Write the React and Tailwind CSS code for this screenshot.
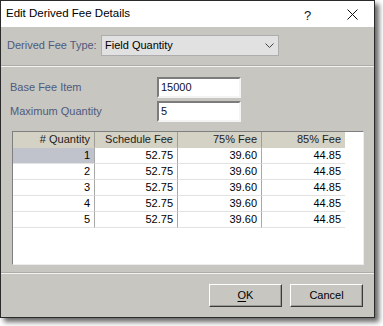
import React from 'react';

const font = { fontFamily: '"Liberation Sans", Arial, sans-serif' };

const rows = [1, 2, 3, 4, 5].map((n) => ({
  qty: n,
  schedule: '52.75',
  fee75: '39.60',
  fee85: '44.85',
}));

const columns = [
  { key: 'qty', label: '# Quantity', width: 'w-[82px]' },
  { key: 'schedule', label: 'Schedule Fee', width: 'w-[83px]' },
  { key: 'fee75', label: '75% Fee', width: 'w-[84px]' },
  { key: 'fee85', label: '85% Fee', width: 'w-[83px]' },
];

const TitleBar = () => (
  <div className="h-[26px] bg-white flex items-center relative">
    <span className="pl-[5px] text-[11.5px] text-black">Edit Derived Fee Details</span>
    <span className="absolute left-[303px] top-[5px] text-[13px] text-[#111]">?</span>
    <svg className="absolute left-[346px] top-[8px]" width="11" height="11" viewBox="0 0 11 11">
      <path d="M0.5 0.5 L10.5 10.5 M10.5 0.5 L0.5 10.5" stroke="#111" strokeWidth="1" fill="none" />
    </svg>
  </div>
);

const FieldRow = ({ label, value, className = '' }) => (
  <div className={`flex items-center ${className}`}>
    <span className="w-[147px] text-[11px] text-[#4e5a7e]">{label}</span>
    <div className="w-[84px] h-[21px] bg-white border-2 border-t-[#7c7c7c] border-l-[#7c7c7c] border-r-[#f4f4f4] border-b-[#f4f4f4] flex items-center pl-[2px] text-[11px] text-[#10102a]">
      {value}
    </div>
  </div>
);

const FeeGrid = () => (
  <div className="ml-[11px] w-[352px] h-[134px] bg-white border border-t-[#7f7f7f] border-l-[#7f7f7f] border-r-[#ececec] border-b-[#ececec]">
    <div className="flex">
      {columns.map((col, i) => (
        <div
          key={col.key}
          className={`${col.width} h-4 bg-[#d4d1c5] flex items-center justify-end pr-[4px] text-[11px] text-[#222] border-b border-[#d4d1c5] ${i < 3 ? 'border-r border-r-[#9d9d98]' : ''}`}
        >
          {col.label}
        </div>
      ))}
    </div>
    {rows.map((row, r) => (
      <div key={row.qty} className="flex">
        {columns.map((col, i) => (
          <div
            key={col.key}
            className={`${col.width} h-4 flex items-center justify-end pr-[4px] text-[11px] text-black border-b border-b-[#e2e2e2] ${i < 3 ? 'border-r border-r-[#a9a9a9]' : ''} ${r === 0 && i === 0 ? 'bg-[#c0c3cb]' : ''}`}
          >
            {row[col.key]}
          </div>
        ))}
      </div>
    ))}
  </div>
);

const Button = ({ children }) => (
  <button className="w-[73px] h-[23px] bg-[#c8c6c0] border border-t-white border-l-white border-r-[#3a3a3a] border-b-[#3a3a3a] shadow-[inset_-1px_-1px_0_#9a9a96] text-[11px] text-black flex items-center justify-center">
    {children}
  </button>
);

const Separator = () => (
  <div className="border-t border-t-[#aeaca6] border-b border-b-[#f2f2f2]" />
);

export default function App() {
  return (
    <div className="w-[383px] h-[326px] bg-white" style={font}>
      <div className="w-[375px] h-[318px] flex flex-col border border-[#2a2a2a] bg-[#c8c6c0] shadow-[4px_4px_5px_rgba(0,0,0,0.6)]">
        <TitleBar />

        <div className="pt-[8px] pb-[9px] pl-[6px] flex items-center">
          <span className="w-[94px] text-[11px] text-[#4e5a7e]">Derived Fee Type:</span>
          <div className="w-[178px] h-[21px] bg-[#e1e1e1] border border-[#adadad] flex items-center justify-between pl-[3px] pr-[4px]">
            <span className="text-[11px] text-black">Field Quantity</span>
            <svg width="9" height="5" viewBox="0 0 9 5">
              <path d="M0.5 0.5 L4.5 4.5 L8.5 0.5" stroke="#444" strokeWidth="1" fill="none" />
            </svg>
          </div>
        </div>

        <Separator />

        <div className="pt-[10px] pb-[7px] flex flex-col">
          <div className="pl-[9px] flex flex-col gap-[3px]">
            <FieldRow label="Base Fee Item" value="15000" />
            <FieldRow label="Maximum Quantity" value="5" />
          </div>
          <div className="mt-[9px]">
            <FeeGrid />
          </div>
        </div>

        <Separator />

        <div className="pt-[10px] pr-[11px] flex justify-end gap-[8px]">
          <Button>
            <span className="underline underline-offset-[2px]">O</span>K
          </Button>
          <Button>Cancel</Button>
        </div>
      </div>
    </div>
  );
}
